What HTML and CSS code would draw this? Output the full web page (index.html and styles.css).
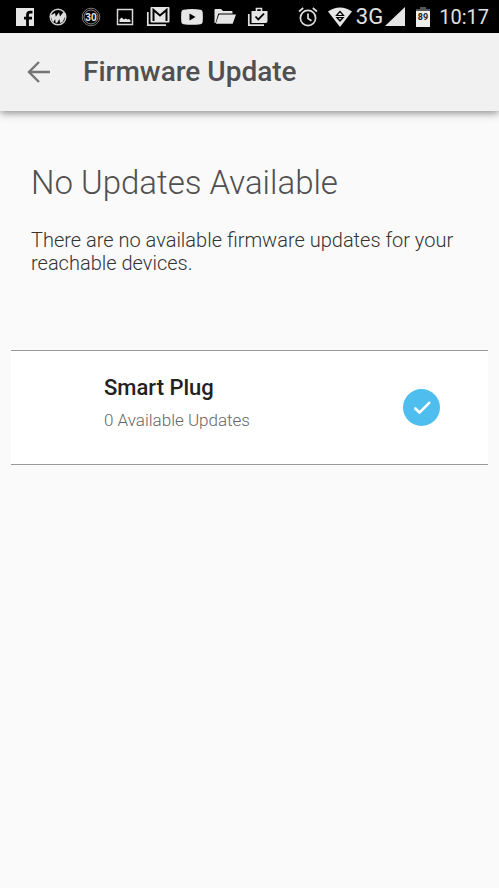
FILE: index.html
```html
<!DOCTYPE html>
<html lang="en">
<head>
<meta charset="utf-8">
<meta name="viewport" content="width=device-width, initial-scale=1">
<title>Firmware Update</title>
<link rel="stylesheet" href="styles.css">
</head>
<body>
<div class="status-bar">
  <div class="notifications">
    <svg class="icon" viewBox="0 0 24 24" aria-hidden="true"><path fill="#e6e6e6" d="M3 3h18v18H3z"/><path fill="none" stroke="#000" stroke-width="2.800" d="M14.500 21V10q0-2.800 2.800-2.800h2.200M11 13.200h8"/></svg>
    <svg class="icon" viewBox="0 0 24 24" aria-hidden="true"><circle cx="12" cy="12" r="7.800" fill="none" stroke="#cfcfcf" stroke-width="1.500"/><path fill="#dedede" d="M4.500 10.500 9 8l.8 3.800L13 7.500l1 4L17.500 7l2.500 3-3.500 7-2.500 1-.5-4-2.500 4-1.500-.5-.3-3.500L7.500 17 6 15.500z"/></svg>
    <svg class="icon" viewBox="0 0 24 24" aria-hidden="true"><circle cx="12" cy="12" r="8.800" fill="none" stroke="#777"/><circle cx="12" cy="12" r="7" fill="none" stroke="#aaa" stroke-width=".8"/><text class="count" x="12" y="16">30</text></svg>
    <svg class="icon" viewBox="0 0 24 24" aria-hidden="true"><path fill="none" stroke="#d8d8d8" stroke-width="1.500" d="M4.500 4.500h15v15h-15z"/><path fill="#e6e6e6" d="M6.500 17v-2.500l2-2 2.500 2 1.500-1 2 1 1.500-.5 1.500 1.500V17z"/></svg>
    <svg class="icon" viewBox="0 0 24 24" aria-hidden="true"><path fill="none" stroke="#e0e0e0" stroke-width="1.700" d="M1.800 7v13.200H20"/><path fill="#e6e6e6" d="M5.500 2h17q1 0 1 1v13.500q0 1-1 1h-17q-1 0-1-1V3q0-1 1-1z"/><path fill="none" stroke="#000" stroke-width="2" d="M7.500 16V5l6.500 5.500L20.500 5v11"/></svg>
    <svg class="icon" viewBox="0 0 24 24" aria-hidden="true"><path fill="#e6e6e6" d="M3.500 4.700Q12 3.500 20.500 4.700q2 .3 2.200 2.500.4 4.800 0 9.600-.2 2.200-2.200 2.500-8.500 1-17 0-2-.3-2.200-2.500-.4-4.800 0-9.600.2-2.200 2.200-2.500z"/><path d="M9.500 8.500v7l6-3.500z"/></svg>
    <svg class="icon" viewBox="0 0 24 24" aria-hidden="true"><path fill="#e6e6e6" d="M1.500 18V5q0-1 1-1H8l2 2h8.500q1 0 1 1v1.500H5.300L2.500 18z"/><path fill="#e6e6e6" d="M6 9.500h17l-3.300 9.300H2.800z"/></svg>
    <svg class="icon" viewBox="0 0 24 24" aria-hidden="true"><path fill="none" stroke="#e0e0e0" stroke-width="1.700" d="M2.800 9v11.200H18"/><path fill="none" stroke="#e0e0e0" stroke-width="1.600" d="M10.500 6V3.500h5V6"/><path fill="#e6e6e6" d="M5.500 6h16v10q0 2-2 2h-14z"/><path fill="none" stroke="#000" stroke-width="1.800" d="m9.500 11.500 2.800 3 5.700-5.800"/></svg>
  </div>
  <div class="system">
    <svg class="icon" viewBox="0 0 24 24" aria-hidden="true"><g fill="none" stroke="#dcdcdc" stroke-width="1.700"><circle cx="12" cy="13" r="7.600"/><path d="m3 6.500 4.200-3.500M21 6.500 16.800 3M12 8.500V13.500l3.500 2.200"/></g></svg>
    <svg class="icon wifi" viewBox="0 0 24 24" aria-hidden="true"><path fill="#e6e6e6" d="M0 6.500Q12-1.500 24 6.500L12 22z"/><path fill="none" stroke="#000" stroke-width="1.200" d="m12 6.500 3.500 4h-7z"/><path d="M7.500 12h9L12 17z"/><path fill="#e6e6e6" d="M10.500 13h3L12 14.800z"/></svg>
    <span class="network">3G</span>
    <svg class="icon signal" viewBox="0 0 20 24" aria-hidden="true"><path fill="#e6e6e6" d="M20 2v19H0z"/></svg>
    <svg class="icon battery" viewBox="0 0 14 24" aria-hidden="true"><path fill="#555" d="M4 2h6v2h4v4H0V4h4z"/><path fill="#eee" d="M0 6h14v16H0z"/><text class="level" x="7" y="15">89</text></svg>
    <time class="clock">10:17</time>
  </div>
</div>
<header class="app-bar">
  <button class="back" type="button" aria-label="Back"><svg viewBox="0 0 24 24" aria-hidden="true"><path fill="none" stroke="#757575" stroke-width="2.400" d="M23 12H2.500M12 2 2 12l10 10"/></svg></button>
  <h1 class="title">Firmware Update</h1>
</header>
<main class="content">
  <section class="summary">
    <h2 class="headline">No Updates Available</h2>
    <p class="message">There are no available firmware updates for your reachable devices.</p>
  </section>
  <ul class="devices">
    <li class="device">
      <div class="details">
        <h3 class="name">Smart Plug</h3>
        <p class="updates">0 Available Updates</p>
      </div>
      <svg class="check" viewBox="0 0 36 36" role="img" aria-label="Up to date"><circle cx="18" cy="18" r="18" fill="#4dbeee"/><path fill="none" stroke="#fff" stroke-width="2.600" stroke-linecap="round" stroke-linejoin="round" d="m12 19 4 4 9.500-9.500"/></svg>
    </li>
  </ul>
</main>
</body>
</html>
```
FILE: styles.css
```css
* {
  box-sizing: border-box;
}

body {
  margin: 0;
  min-height: 100vh;
  background: #fafafa;
  color: #333;
  font-family: Roboto, "Liberation Sans", sans-serif;
}

h1, h2, h3, p, ul {
  margin: 0;
  padding: 0;
}

.status-bar {
  display: flex;
  align-items: center;
  justify-content: space-between;
  height: 33px;
  padding: 0 10px 0 8px;
  background: #000;
  color: #e0e0e0;
}

.notifications {
  display: grid;
  grid-template-columns: repeat(8, 1fr);
  justify-items: center;
  width: 267px;
}

.system {
  display: flex;
  align-items: center;
}

.icon {
  display: block;
  width: 24px;
  height: 24px;
}

.count {
  fill: #e6e6e6;
  font-size: 10px;
  font-weight: 700;
  text-anchor: middle;
}

.wifi {
  margin: 0 4px 0 8px;
}

.network {
  font-size: 22px;
  line-height: 24px;
}

.signal {
  width: 20px;
  margin-left: 2px;
}

.battery {
  width: 14px;
  margin: 0 9px 0 11px;
}

.level {
  fill: #222;
  font-size: 9px;
  font-weight: 700;
  text-anchor: middle;
}

.clock {
  font-size: 20px;
  line-height: 24px;
}

.app-bar {
  display: flex;
  align-items: center;
  height: 78px;
  padding: 0 27px;
  background: #f1f1f1;
  box-shadow: 0 2px 8px rgba(0, 0, 0, 0.45);
  clip-path: inset(0 0 -16px 0);
}

.back {
  width: 24px;
  height: 24px;
  margin-right: 32px;
  padding: 0;
  border: 0;
  background: none;
}

.back svg {
  display: block;
}

.title {
  color: #505050;
  font-size: 28px;
  font-weight: 500;
  line-height: 34px;
}

.content {
  padding: 50px 11px;
}

.summary {
  padding: 0 20px;
}

.headline {
  color: #505050;
  font-size: 33px;
  font-weight: 300;
  line-height: 44px;
}

.message {
  margin-top: 24px;
  font-size: 20px;
  font-weight: 300;
  line-height: 23px;
}

.devices {
  margin-top: 75px;
  list-style: none;
}

.device {
  display: flex;
  align-items: center;
  justify-content: space-between;
  padding: 22px 48px 22px 93px;
  border: solid #999;
  border-width: 1px 0;
  background: #fff;
}

.details {
  padding-bottom: 10px;
}

.name {
  color: #222;
  font-size: 22px;
  font-weight: 500;
  line-height: 30px;
}

.updates {
  margin-top: 5px;
  color: #666;
  font-size: 17px;
  font-weight: 300;
  line-height: 24px;
}

.check {
  width: 37px;
  height: 37px;
}
```
